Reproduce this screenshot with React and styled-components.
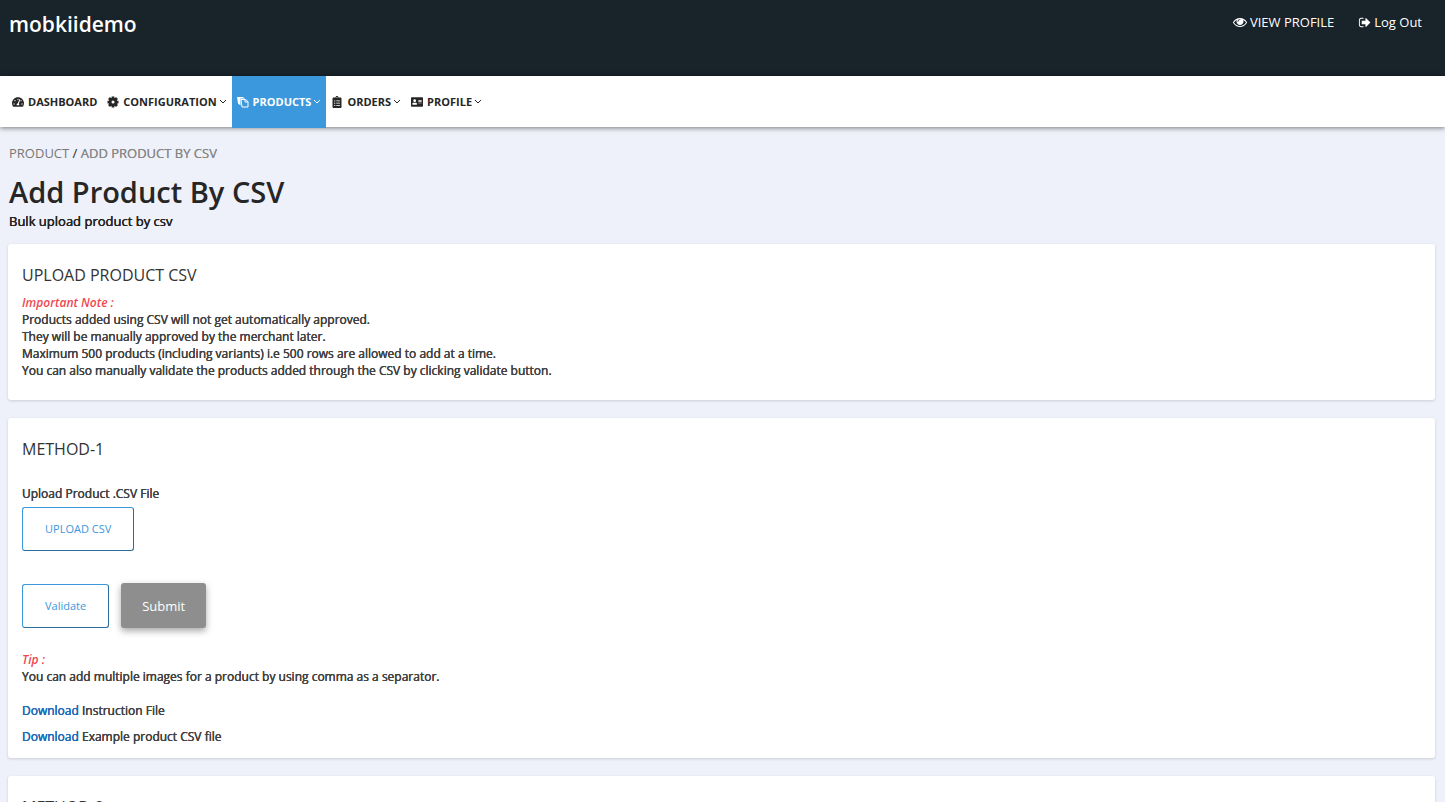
import React from "react";
import styled, { createGlobalStyle } from "styled-components";
import { FaTachometerAlt, FaClipboardList, FaAddressCard } from "react-icons/fa";

const GlobalStyle = createGlobalStyle`
  *, *::before, *::after { box-sizing: border-box; }
  body {
    margin: 0;
    background: #eef1f9;
    color: #444;
    font-family: "Open Sans", "Noto Sans", sans-serif;
    font-size: 13px;
    line-height: 17px;
  }
  h1, h2, p { margin: 0; }
  a { text-decoration: none; }
`;

const Header = styled.header`
  display: flex;
  justify-content: space-between;
  align-items: flex-start;
  height: 76px;
  padding: 8px 23px 0 9px;
  background: #19232a;
  color: #fff;
`;

const Brand = styled.a`
  color: #fff;
  font-size: 21px;
  line-height: 32px;
  font-weight: 600;
`;

const AccountLinks = styled.nav`
  display: flex;
  gap: 24px;
  padding-top: 4px;
`;

const AccountLink = styled.a`
  display: flex;
  align-items: center;
  gap: 3px;
  color: #fff;
  font-size: 13px;
  line-height: 20px;
`;

const NavBar = styled.nav`
  position: relative;
  display: flex;
  height: 51px;
  padding-left: 7px;
  background: #fff;
  box-shadow: 0 1px 5px rgba(0, 0, 0, 0.5);
`;

const NavItem = styled.a`
  display: flex;
  align-items: center;
  gap: 4px;
  padding: 0 5px;
  background: ${(p) => (p.$active ? "#3c98dc" : "transparent")};
  box-shadow: ${(p) => (p.$active ? "0 1px #3c98dc" : "none")};
  color: ${(p) => (p.$active ? "#fff" : "#262626")};
  font-size: 11px;
  font-weight: 700;
`;

const NavLabel = styled.span`
  display: flex;
  align-items: center;
  gap: 2px;
`;

const Page = styled.main`
  padding: 17px 10px 18px 8px;
`;

const Heading = styled.div`
  padding-left: 1px;
  color: #262626;
`;

const Breadcrumb = styled.nav`
  font-size: 13px;
  line-height: 18px;
  color: #262626;
`;

const Crumb = styled.a`
  color: #777;
`;

const CurrentCrumb = styled.span`
  color: #888;
  text-shadow: 0 0 currentColor;
`;

const Title = styled.h1`
  margin-top: 10px;
  font-size: 29px;
  line-height: 40px;
  font-weight: 600;
`;

const Subtitle = styled.p`
  margin-bottom: 14px;
  line-height: 18px;
  text-shadow: 0 0 currentColor, 0 0 currentColor;
`;

const Card = styled.section`
  margin-bottom: 18px;
  padding: 20px 14px 13px;
  border-radius: 3px;
  background: #fff;
  box-shadow: 0 1px 3px rgba(0, 0, 0, 0.15);
  font-size: 12px;
  text-shadow: 0 0 currentColor, 0 0 currentColor;
`;

const CardTitle = styled.h2`
  margin-bottom: 8px;
  color: #333;
  font-size: 16px;
  line-height: 22px;
  font-weight: 400;
  text-shadow: none;
`;

const Note = styled.p`
  color: #f04850;
  font-weight: 600;
  font-style: italic;
  text-shadow: none;
`;

const Notice = styled.div`
  padding-bottom: 8px;
`;

const FieldLabel = styled.label`
  display: block;
  margin: 25px 0 5px;
`;

const OutlineButton = styled.button`
  height: 44px;
  padding: 0 22px;
  border: 1px solid;
  border-color: #3c98dc #2b6c9e #2b6c9e #3c98dc;
  border-radius: 3px;
  background: #fff;
  color: #3c98dc;
  font: 400 11px/18px "Open Sans", sans-serif;
`;

const SubmitButton = styled.button`
  height: 45px;
  padding: 0 21px;
  border: 0;
  border-radius: 3px;
  background: #8e8e8e;
  color: #fff;
  font: 400 13px/18px "Open Sans", sans-serif;
  box-shadow: 0 3px 7px rgba(0, 0, 0, 0.35);
`;

const Actions = styled.div`
  display: flex;
  align-items: center;
  gap: 12px;
  margin: 32px 0 23px;
`;

const Downloads = styled.div`
  display: grid;
  gap: 9px;
  margin-top: 17px;
`;

const DownloadLink = styled.a`
  color: #1e6cb8;
`;

const EyeIcon = () => (
  <svg width="14" height="14" viewBox="0 0 1792 1792" fill="currentColor" aria-hidden="true">
    <path d="M1664 960q-152-236-381-353 61 104 61 225 0 185-131.5 316.5t-316.5 131.5-316.5-131.5-131.5-316.5q0-121 61-225-229 117-381 353 133 205 333.5 326.5t434.5 121.5 434.5-121.5 333.5-326.5zm-720-384q0-20-14-34t-34-14q-125 0-214.5 89.5t-89.5 214.5q0 20 14 34t34 14 34-14 14-34q0-86 61-147t147-61q20 0 34-14t14-34zm848 384q0 34-20 69-140 230-376.5 368.5t-499.5 138.5-499.5-139-376.5-368q-20-35-20-69t20-69q140-229 376.5-368t499.5-139 499.5 139 376.5 368q20 35 20 69z" />
  </svg>
);

const LogOutIcon = () => (
  <svg width="13" height="13" viewBox="0 0 1664 1792" fill="currentColor" aria-hidden="true">
    <path d="M704 1440q0 4 1 20t.5 26.5-3 23.5-10 19.5-20.5 6.5h-320q-119 0-203.5-84.5t-84.5-203.5v-704q0-119 84.5-203.5t203.5-84.5h320q13 0 22.5 9.5t9.5 22.5q0 4 1 20t.5 26.5-3 23.5-10 19.5-20.5 6.5h-320q-66 0-113 47t-47 113v704q0 66 47 113t113 47h312l11.5 1 11.5 3 8 5.5 7 9 2 13.5zm928-544q0 26-19 45l-544 544q-19 19-45 19t-45-19-19-45v-288h-448q-26 0-45-19t-19-45v-384q0-26 19-45t45-19h448v-288q0-26 19-45t45-19 45 19l544 544q19 19 19 45z" />
  </svg>
);

const GearIcon = () => (
  <svg width="12" height="12" viewBox="0 0 24 24" aria-hidden="true">
    <g stroke="currentColor" strokeWidth="5.5">
      <path d="M12 1v22M1 12h22M4 4l16 16M20 4L4 20" />
    </g>
    <circle cx="12" cy="12" r="6" fill="none" stroke="currentColor" strokeWidth="5" />
    <circle cx="12" cy="12" r="3" fill="#fff" />
  </svg>
);

const ProductsIcon = () => (
  <svg width="12" height="12" viewBox="0 0 24 24" fill="none" aria-hidden="true">
    <path fill="currentColor" d="M0 2h12l4 3H7v14l-5-4z" />
    <path stroke="currentColor" strokeWidth="2" d="M8 7h9l5 4v11H10z" />
    <path stroke="currentColor" strokeWidth="2" d="M16 7v5h6" />
  </svg>
);

const Chevron = () => (
  <svg width="8" height="8" viewBox="0 0 8 8" fill="none" stroke="currentColor" aria-hidden="true">
    <path d="M1 2l3 3 3-3" />
  </svg>
);

export default function App() {
  return (
    <>
      <GlobalStyle />
      <Header>
        <Brand href="#">mobkiidemo</Brand>
        <AccountLinks>
          <AccountLink href="#"><EyeIcon />VIEW PROFILE</AccountLink>
          <AccountLink href="#"><LogOutIcon />Log Out</AccountLink>
        </AccountLinks>
      </Header>
      <NavBar>
        <NavItem href="#"><FaTachometerAlt size={12} />DASHBOARD</NavItem>
        <NavItem href="#"><GearIcon /><NavLabel>CONFIGURATION<Chevron /></NavLabel></NavItem>
        <NavItem href="#" $active><ProductsIcon /><NavLabel>PRODUCTS<Chevron /></NavLabel></NavItem>
        <NavItem href="#"><FaClipboardList size={12} /><NavLabel>ORDERS<Chevron /></NavLabel></NavItem>
        <NavItem href="#"><FaAddressCard size={12} /><NavLabel>PROFILE<Chevron /></NavLabel></NavItem>
      </NavBar>
      <Page>
        <Heading>
          <Breadcrumb><Crumb href="#">PRODUCT</Crumb> / <CurrentCrumb>ADD PRODUCT BY CSV</CurrentCrumb></Breadcrumb>
          <Title>Add Product By CSV</Title>
          <Subtitle>Bulk upload product by csv</Subtitle>
        </Heading>
        <Card>
          <CardTitle>UPLOAD PRODUCT CSV</CardTitle>
          <Notice>
            <Note>Important Note :</Note>
            <p>Products added using CSV will not get automatically approved.</p>
            <p>They will be manually approved by the merchant later.</p>
            <p>Maximum 500 products (including variants) i.e 500 rows are allowed to add at a time.</p>
            <p>You can also manually validate the products added through the CSV by clicking validate button.</p>
          </Notice>
        </Card>
        <Card>
          <CardTitle>METHOD-1</CardTitle>
          <FieldLabel htmlFor="csv">Upload Product .CSV File</FieldLabel>
          <OutlineButton id="csv" type="button">UPLOAD CSV</OutlineButton>
          <Actions>
            <OutlineButton type="button">Validate</OutlineButton>
            <SubmitButton type="button">Submit</SubmitButton>
          </Actions>
          <Note>Tip :</Note>
          <p>You can add multiple images for a product by using comma as a separator.</p>
          <Downloads>
            <p><DownloadLink href="#">Download</DownloadLink> Instruction File</p>
            <p><DownloadLink href="#">Download</DownloadLink> Example product CSV file</p>
          </Downloads>
        </Card>
        <Card>
          <CardTitle>METHOD-2</CardTitle>
        </Card>
      </Page>
    </>
  );
}
